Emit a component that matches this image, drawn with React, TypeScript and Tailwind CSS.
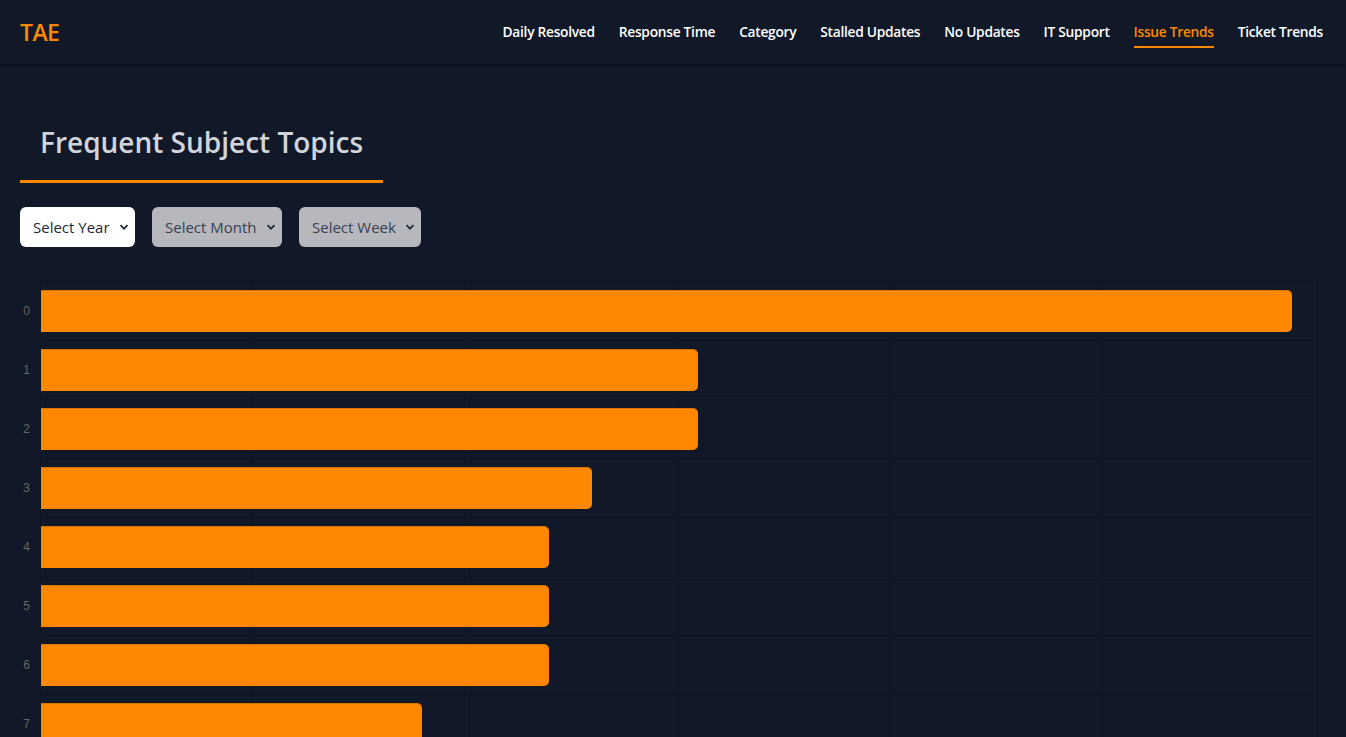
import React from "react";

const NAV = [
  "Daily Resolved",
  "Response Time",
  "Category",
  "Stalled Updates",
  "No Updates",
  "IT Support",
  "Issue Trends",
  "Ticket Trends",
];

const DATA = [59, 31, 31, 26, 24, 24, 24, 18];
const MAX = 60;

function Chevron() {
  return (
    <svg
      className="pointer-events-none absolute right-[6px] top-1/2 -translate-y-1/2"
      width="10"
      height="10"
      viewBox="0 0 10 10"
    >
      <path d="M1.5 3.2 L5 6.7 L8.5 3.2" fill="none" stroke="#1f2937" strokeWidth="1.8" />
    </svg>
  );
}

function Select({ label, light }: { label: string; light?: boolean }) {
  return (
    <div className="relative">
      <select
        className={
          "appearance-none h-10 rounded-md pl-[13px] pr-[25px] text-[15px] outline-none font-['Open_Sans',sans-serif] " +
          (light ? "bg-white text-[#1f2937]" : "bg-[#b7b8bd] text-[#374151]")
        }
        defaultValue=""
      >
        <option value="">{label}</option>
      </select>
      <Chevron />
    </div>
  );
}

export default function App() {
  return (
    <div className="h-screen overflow-hidden bg-[#111827] font-['Open_Sans',sans-serif]">
      <header className="relative z-10 h-16 flex items-center justify-between pl-5 pr-[23px] bg-[#111827] shadow-[0_2px_4px_rgba(0,0,0,0.35)]">
        <div className="text-[23px] font-semibold text-[#ff8800] tracking-tight">TAE</div>
        <nav className="flex items-center gap-6">
          {NAV.map((n) => (
            <a
              key={n}
              className={
                "pt-[6px] pb-[4px] border-b-2 text-[13.75px] font-semibold tracking-[-0.02em] " +
                (n === "Issue Trends"
                  ? "text-[#ff8800] border-[#ff8800]"
                  : "text-white border-transparent")
              }
            >
              {n}
            </a>
          ))}
        </nav>
      </header>

      <main className="px-5 pt-[60px]">
        <div className="inline-block px-5 pb-5 border-b-[3px] border-[#ff8800]">
          <h1 className="text-[28px] leading-9 font-semibold text-[#d1d5db]">Frequent Subject Topics</h1>
        </div>

        <div className="mt-6 flex gap-[17px]">
          <Select label="Select Year" light />
          <Select label="Select Month" />
          <Select label="Select Week" />
        </div>
      </main>

      <div className="mt-[34px] flex">
        <div className="w-10 shrink-0">
          {DATA.map((_, i) => (
            <div
              key={i}
              className="h-[59px] flex items-center justify-end pr-[10px] text-xs text-[#666666] font-['Liberation_Sans',Arial,sans-serif]"
            >
              {i}
            </div>
          ))}
        </div>
        <div className="relative w-[1273px]">
          <div className="absolute inset-0 grid grid-cols-6">
            {[0, 1, 2, 3, 4, 5].map((c) => (
              <div
                key={c}
                className={"border-l border-black/15 " + (c === 5 ? "border-r" : "")}
              />
            ))}
          </div>
          {DATA.map((v, i) => (
            <div key={i} className="relative h-[59px] border-t border-black/15 pt-[8px]">
              <div
                className="h-[42px] ml-px bg-[#ff8800] rounded-r-[5px] border-t border-[#d87400]"
                style={{ width: `${(v / MAX) * 1273 - 1}px` }}
              />
            </div>
          ))}
        </div>
      </div>
    </div>
  );
}
